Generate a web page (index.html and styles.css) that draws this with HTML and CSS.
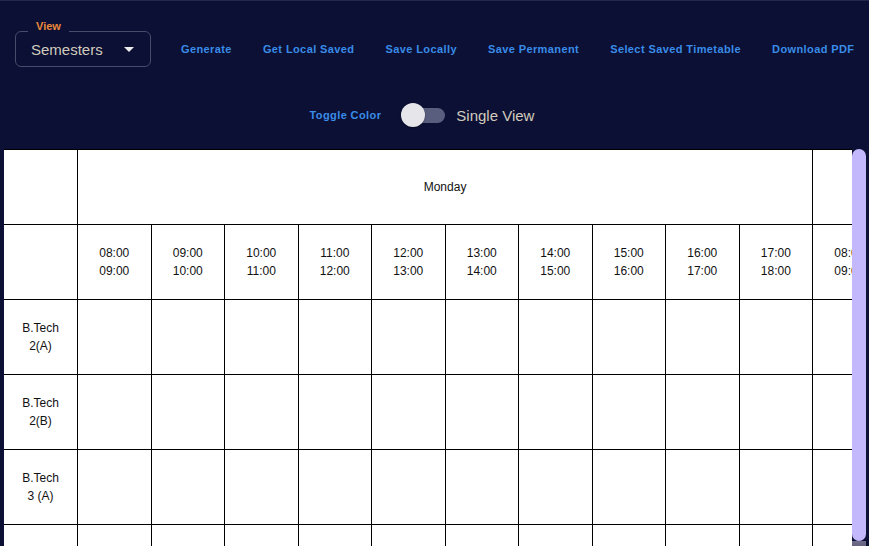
FILE: index.html
```html
<!DOCTYPE html>
<html lang="en">
<head>
<meta charset="utf-8">
<title>Timetable</title>
<link rel="stylesheet" href="styles.css">
</head>
<body>
<header class="toolbar">
  <div class="actions">
    <div class="form-control">
      <div class="select">
        <span class="select-label">View</span>
        <span class="select-value">Semesters</span>
        <svg class="select-arrow" viewBox="0 0 24 24" width="24" height="24"><path d="M7 10l5 5 5-5z"/></svg>
      </div>
    </div>
    <button class="text-btn">Generate</button>
    <button class="text-btn">Get Local Saved</button>
    <button class="text-btn">Save Locally</button>
    <button class="text-btn">Save Permanent</button>
    <button class="text-btn">Select Saved Timetable</button>
    <button class="text-btn">Download PDF</button>
  </div>
  <div class="view-row">
    <button class="text-btn">Toggle Color</button>
    <label class="switch-label">
      <span class="switch"><span class="switch-track"></span><span class="switch-thumb"></span></span>
      <span class="switch-text">Single View</span>
    </label>
  </div>
</header>
<main class="table-area">
  <div class="table-view">
  <table class="timetable">
    <colgroup>
      <col class="c"><col class="c"><col class="c"><col class="c"><col class="c"><col class="c"><col class="c"><col class="c"><col class="c"><col class="c"><col class="c">
      <col class="c"><col class="c"><col class="c"><col class="c"><col class="c"><col class="c"><col class="c"><col class="c"><col class="c"><col class="c">
    </colgroup>
    <tr>
      <th></th>
      <th colspan="10">Monday</th>
      <th colspan="10">Tuesday</th>
    </tr>
    <tr>
      <th></th>
      <th>08:00<br>09:00</th><th>09:00<br>10:00</th><th>10:00<br>11:00</th><th>11:00<br>12:00</th><th>12:00<br>13:00</th>
      <th>13:00<br>14:00</th><th>14:00<br>15:00</th><th>15:00<br>16:00</th><th>16:00<br>17:00</th><th>17:00<br>18:00</th>
      <th>08:00<br>09:00</th><th>09:00<br>10:00</th><th>10:00<br>11:00</th><th>11:00<br>12:00</th><th>12:00<br>13:00</th>
      <th>13:00<br>14:00</th><th>14:00<br>15:00</th><th>15:00<br>16:00</th><th>16:00<br>17:00</th><th>17:00<br>18:00</th>
    </tr>
    <tr>
      <th>B.Tech<br>2(A)</th>
      <td></td><td></td><td></td><td></td><td></td><td></td><td></td><td></td><td></td><td></td>
      <td></td><td></td><td></td><td></td><td></td><td></td><td></td><td></td><td></td><td></td>
    </tr>
    <tr>
      <th>B.Tech<br>2(B)</th>
      <td></td><td></td><td></td><td></td><td></td><td></td><td></td><td></td><td></td><td></td>
      <td></td><td></td><td></td><td></td><td></td><td></td><td></td><td></td><td></td><td></td>
    </tr>
    <tr>
      <th>B.Tech<br>3 (A)</th>
      <td></td><td></td><td></td><td></td><td></td><td></td><td></td><td></td><td></td><td></td>
      <td></td><td></td><td></td><td></td><td></td><td></td><td></td><td></td><td></td><td></td>
    </tr>
    <tr>
      <th>B.Tech<br>3 (B)</th>
      <td></td><td></td><td></td><td></td><td></td><td></td><td></td><td></td><td></td><td></td>
      <td></td><td></td><td></td><td></td><td></td><td></td><td></td><td></td><td></td><td></td>
    </tr>
  </table>
  </div>
  <div class="scroll-rail" aria-hidden="true"><div class="scroll-thumb"></div><div class="scroll-end"></div></div>
</main>
</body>
</html>
```
FILE: styles.css
```css
html, body {
  margin: 0;
  padding: 0;
  height: 100%;
  overflow: hidden;
}
body {
  background: #0b1034;
  font-family: "Liberation Sans", Arial, sans-serif;
}
.toolbar {
  box-sizing: border-box;
  height: 149px;
  padding: 22px 7px 15px;
  border-top: 1px solid #23284a;
  display: flex;
  flex-direction: column;
}
.actions {
  display: flex;
  align-items: center;
  height: 52px;
}
.form-control {
  margin: 8px 22px 8px 8px;
  flex-shrink: 0;
}
.select {
  position: relative;
  box-sizing: border-box;
  width: 136px;
  height: 36px;
  border: 1px solid #474c6a;
  border-radius: 6px;
  display: flex;
  align-items: center;
  padding-left: 15px;
}
.select-label {
  position: absolute;
  left: 12px;
  top: -14px;
  padding: 0 8px;
  background: #0b1034;
  color: #ea8a3c;
  font-size: 11px;
  font-weight: bold;
  line-height: 16px;
}
.select-value {
  color: #d2cbbd;
  font-size: 15px;
  flex: 1;
}
.select-arrow {
  fill: #ececec;
  margin-right: 9px;
}
.text-btn {
  flex-shrink: 0;
  white-space: nowrap;
  background: none;
  border: 0;
  padding: 6px 8px;
  margin-right: 15px;
  color: #3a8ce8;
  font-family: "Liberation Sans", Arial, sans-serif;
  font-size: 11px;
  font-weight: bold;
  letter-spacing: 0.4px;
  line-height: 16px;
  cursor: pointer;
}
.view-row {
  margin-top: 21px;
  height: 38px;
  display: flex;
  align-items: center;
  justify-content: center;
  padding-right: 33px;
}
.view-row .text-btn {
  margin-right: 12px;
}
.switch-label {
  display: flex;
  align-items: center;
}
.switch {
  position: relative;
  width: 44px;
  height: 24px;
  margin-right: 11px;
}
.switch-track {
  position: absolute;
  left: 9px;
  right: 0;
  top: 5px;
  height: 15px;
  border-radius: 8px;
  background: #5a5e7e;
}
.switch-thumb {
  position: absolute;
  left: 0;
  top: 0;
  width: 24px;
  height: 24px;
  border-radius: 50%;
  background: #e6e6ea;
  box-shadow: 0 1px 2px rgba(0,0,0,0.35);
}
.switch-text {
  color: #d2cbbd;
  font-size: 15px;
}
.table-area {
  display: flex;
  margin: 0 3px 0 4px;
  height: 420px;
}
.table-view {
  flex: 1;
  min-width: 0;
  overflow: hidden;
  background: #fff;
}
.scroll-rail {
  width: 14px;
  flex-shrink: 0;
  display: flex;
  flex-direction: column;
}
.scroll-thumb {
  height: 392px;
  border-radius: 7px;
  background: #c3b8fb;
}
.scroll-end {
  flex: 1;
  background: linear-gradient(#6c6a86, #4a4862);
}
.timetable {
  border-collapse: collapse;
  table-layout: fixed;
  width: 1543.5px;
  font-size: 12px;
  line-height: 18px;
  color: #111;
}
.timetable .c {
  width: 73.5px;
}
.timetable th,
.timetable td {
  border: 1px solid #000;
  height: 74px;
  padding: 0;
  text-align: center;
  vertical-align: middle;
  font-weight: normal;
}
.timetable tr > :first-child {
  border-left: 0;
}
```
